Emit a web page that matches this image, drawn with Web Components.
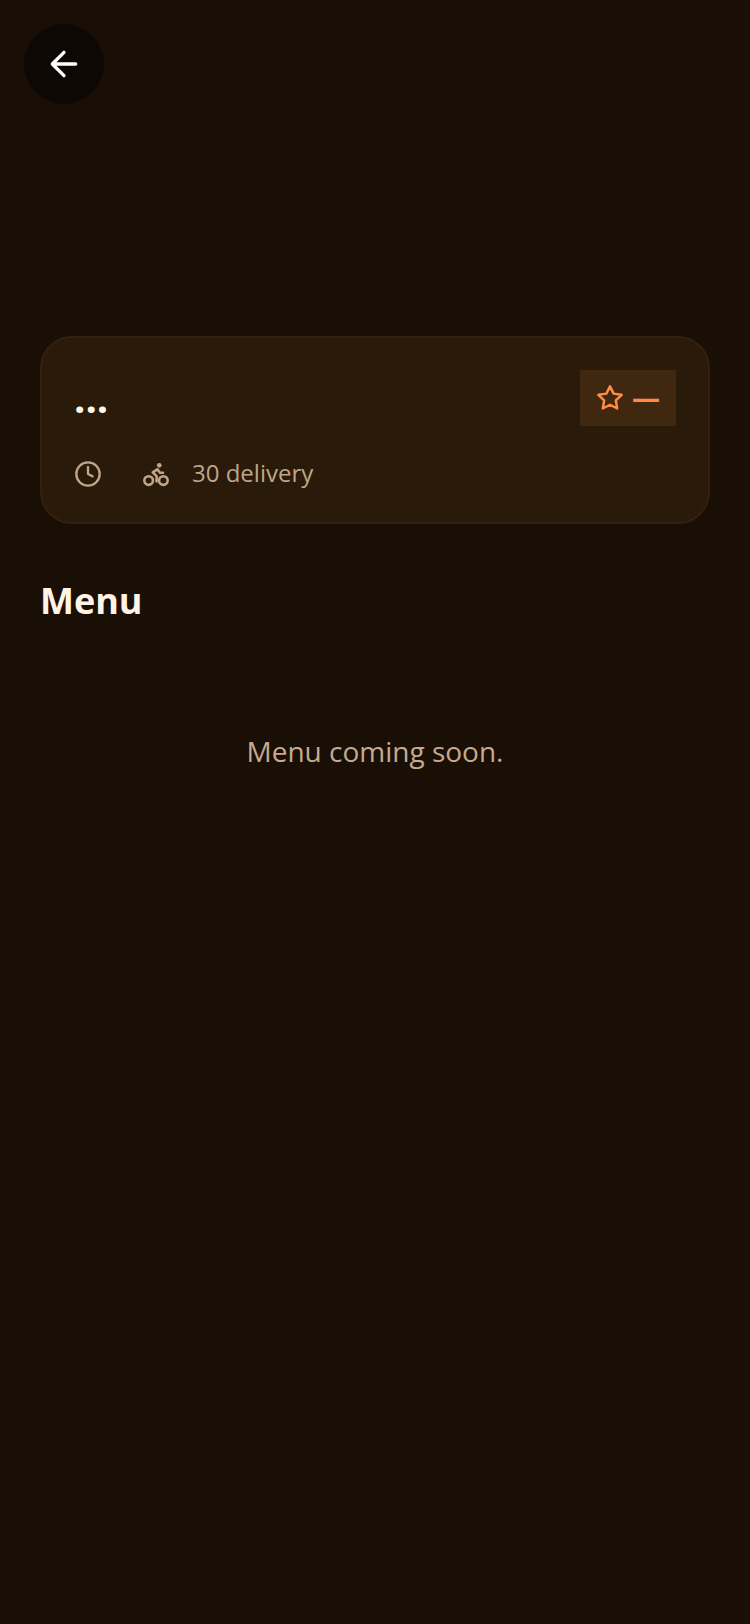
<!DOCTYPE html>
<html lang="en"><head><meta charset="utf-8"><title>Menu</title>
<style>
html,body{margin:0;padding:0;background:#1a0f05;}
body{font-family:"Open Sans",sans-serif;width:750px;min-height:1624px;}
</style></head>
<body>
<restaurant-page></restaurant-page>
<script>
class BackButton extends HTMLElement{constructor(){super();this.attachShadow({mode:'open'}).innerHTML=`<style>
:host{display:flex;width:80px;height:80px;border-radius:50%;background:#0d0803;align-items:center;justify-content:center}
svg{width:40px;height:40px;display:block}
</style><svg viewBox="0 0 24 24" fill="none" stroke="#fff" stroke-width="2" stroke-linecap="round" stroke-linejoin="round"><path d="M19 12H5M12 19l-7-7 7-7"/></svg>`;}}
class RatingChip extends HTMLElement{constructor(){super();this.attachShadow({mode:'open'}).innerHTML=`<style>
:host{display:flex;align-items:center;gap:8px;height:56px;padding:0 16px;box-sizing:border-box;background:#3f2710;color:#ff8c42;font-size:28px;font-weight:700;line-height:1}
svg{width:28px;height:28px;display:block}
span{display:block;transform:translateY(-1px)}
</style><svg viewBox="0 0 24 24" fill="none" stroke="#ff8c42" stroke-width="2.1" stroke-linecap="round" stroke-linejoin="round"><path d="M12 2l3.09 6.26L22 9.27l-5 4.87 1.18 6.88L12 17.77l-6.18 3.25L7 14.14 2 9.27l6.91-1.01z"/></svg><span><slot></slot></span>`;}}
class MetaRow extends HTMLElement{constructor(){super();this.attachShadow({mode:'open'}).innerHTML=`<style>
:host{display:flex;align-items:center;color:#bfa589;font-size:24px;line-height:30px;height:32px}
svg{display:block;flex:none;width:28px;height:28px}
.clock{margin-right:40px}
.bike{margin-right:22px}
span{display:block;margin-top:-2px}
</style>
<svg class="clock" viewBox="0 0 24 24" fill="none" stroke="#bfa589" stroke-width="2" stroke-linecap="round" stroke-linejoin="round"><circle cx="12" cy="12" r="10"/><path d="M12 6v6l4 2"/></svg>
<svg class="bike" viewBox="0 0 24 24" fill="none" stroke="#bfa589" stroke-linecap="round" stroke-linejoin="round"><circle cx="5.7" cy="17.6" r="3.7" stroke-width="2.2"/><circle cx="18.3" cy="17.6" r="3.7" stroke-width="2.2"/><circle cx="14.8" cy="4.6" r="2" fill="#bfa589" stroke="none"/><path d="M13.2 8L9.2 10.6l3.3 3.2v4.6M13.2 8l2.2 2.9h2.6" stroke-width="2.2"/></svg>
<span><slot></slot></span>`;}}
class InfoCard extends HTMLElement{constructor(){super();this.attachShadow({mode:'open'}).innerHTML=`<style>
:host{display:block;box-sizing:border-box;width:670px;height:188px;margin-left:40px;padding:32px;border:2px solid #33200f;border-radius:32px;background:#2a1a0a}
.top{display:flex;justify-content:space-between;align-items:flex-start;height:56px}
h1{margin:0;color:#fff6ec;font-size:40px;font-weight:700;line-height:56px;transform:translateY(-0.5px)}
.meta{margin-top:32px}
</style><div class="top"><h1>...</h1><rating-chip>—</rating-chip></div><meta-row class="meta">30 delivery</meta-row>`;}}
class MenuSection extends HTMLElement{constructor(){super();this.attachShadow({mode:'open'}).innerHTML=`<style>
:host{display:block;padding:0 40px}
h2{margin:0;color:#fff3e6;font-size:36px;font-weight:700;line-height:48px}
p{margin:0;padding-top:106px;text-align:center;color:#c4aa8f;font-size:28px;line-height:40px}
</style><h2>Menu</h2><p>Menu coming soon.</p>`;}}
class RestaurantPage extends HTMLElement{constructor(){super();this.attachShadow({mode:'open'}).innerHTML=`<style>
:host{display:block;width:750px;min-height:1624px;background:#1a0f05;font-family:"Open Sans",sans-serif}
.head{padding:24px;height:288px}
menu-section{margin-top:53px}
</style><div class="head"><back-button></back-button></div><info-card></info-card><menu-section></menu-section>`;}}
customElements.define('back-button',BackButton);
customElements.define('rating-chip',RatingChip);
customElements.define('meta-row',MetaRow);
customElements.define('info-card',InfoCard);
customElements.define('menu-section',MenuSection);
customElements.define('restaurant-page',RestaurantPage);
</script>
</body></html>
